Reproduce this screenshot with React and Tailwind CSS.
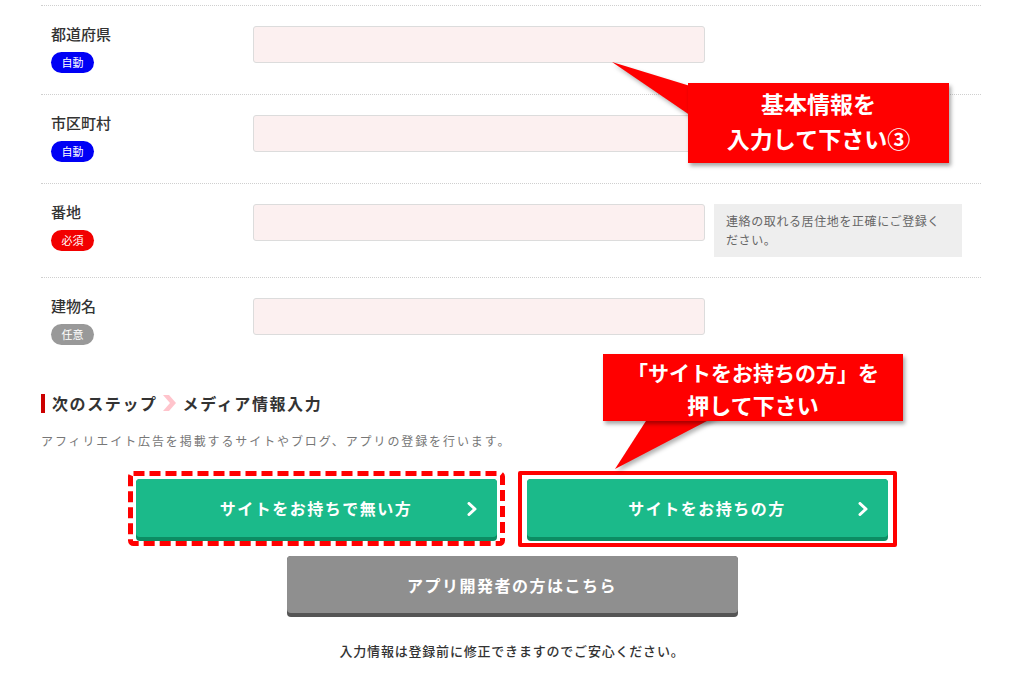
import React from "react";

const FONT = { fontFamily: '"Noto Sans CJK JP", "Noto Sans", sans-serif' };

const rows = [
  { label: "都道府県", badge: "自動", badgeCls: "bg-[#0000f5]" },
  { label: "市区町村", badge: "自動", badgeCls: "bg-[#0000f5]" },
  { label: "番地", badge: "必須", badgeCls: "bg-[#f20000]", help: "連絡の取れる居住地を正確にご登録ください。" },
  { label: "建物名", badge: "任意", badgeCls: "bg-[#999999]", last: true },
];

function Chevron() {
  return (
    <svg width="12" height="14" viewBox="0 0 12 14" className="absolute right-[19px] top-[23px]">
      <polyline points="3,1.5 9,7 3,12.5" fill="none" stroke="#fff" strokeWidth="3" strokeLinecap="round" strokeLinejoin="round" />
    </svg>
  );
}

function GreenButton({ children }) {
  return (
    <div className="relative w-[361px] h-[62px] rounded-[4px] bg-[#0c8d63]">
      <div className="h-[58px] rounded-[4px] bg-[#1bba8a] flex items-center justify-center text-white text-[16px] font-bold tracking-[1.5px]">
        {children}
      </div>
      <Chevron />
    </div>
  );
}

export default function App() {
  return (
    <div className="relative w-[1024px] h-[676px] overflow-hidden bg-white text-[#333]" style={FONT}>
      <div className="ml-[41px] w-[940px] pt-[5px]">
        {rows.map((r) => (
          <div key={r.label} className={`border-t border-dotted border-[#cfcfcf] pl-[10px] pt-[20px] flex ${r.last ? "pb-0" : "pb-[20px]"}`}>
            <div className="w-[202px] min-h-[48px] flex flex-col items-start">
              <div className="text-[15px] leading-[16px] font-medium text-[#333]">{r.label}</div>
              <div className={`mt-[10px] h-[21px] w-[43px] rounded-full ${r.badgeCls} text-white text-[11px] flex items-center justify-center`}>
                {r.badge}
              </div>
            </div>
            <div className="w-[452px] h-[37px] border border-[#dcdcdc] rounded-[3px] bg-[#fcf0f0]" />
            {r.help && (
              <div className="ml-[9px] w-[248px] h-[53px] bg-[#eeeeee] px-[12px] py-[7px] text-[12px] leading-[19px] tracking-[0.6px] text-[#666]">
                {r.help}
              </div>
            )}
          </div>
        ))}

        <div className="mt-[45px] flex items-center">
          <div className="w-[4px] h-[19px] bg-[#cc0000]" />
          <span className="ml-[7px] text-[16px] font-bold tracking-[1.6px] text-[#333]">次のステップ</span>
          <svg width="16" height="16" viewBox="0 0 16 16" className="ml-[4px] mr-[5px]">
            <polygon points="1,0 7,0 14,8 7,16 1,16 8,8" fill="#ffc4cc" />
          </svg>
          <span className="text-[16px] font-bold tracking-[1.6px] text-[#333]">メディア情報入力</span>
        </div>

        <p className="mt-[16px] text-[12px] leading-[20px] tracking-[1.9px] text-[#777]">
          アフィリエイト広告を掲載するサイトやブログ、アプリの登録を行います。
        </p>
      </div>

      <div className="mt-[20px] flex justify-center gap-[13px]">
        <div className="relative w-[377px] h-[75px] pl-[8px] pt-[8px]">
          <svg className="absolute inset-0" width="377" height="75">
            <rect x="2.5" y="2.5" width="372" height="70" rx="3" fill="none" stroke="#ff0000" strokeWidth="5" strokeDasharray="11 5" />
          </svg>
          <GreenButton>サイトをお持ちで無い方</GreenButton>
        </div>
        <div className="w-[379px] h-[76px] border-[4px] border-[#ff0000] rounded-[2px] pl-[5px] pt-[4px]">
          <GreenButton>サイトをお持ちの方</GreenButton>
        </div>
      </div>

      <div className="mt-[9px] mx-auto w-[451px] h-[61px] rounded-[4px] bg-[#555555]">
        <div className="h-[57px] rounded-[4px] bg-[#8f8f8f] flex items-center justify-center text-white text-[16px] font-bold tracking-[1.5px]">
          アプリ開発者の方はこちら
        </div>
      </div>

      <p className="mt-[24px] text-center text-[13px] leading-[20px] font-medium tracking-[0.8px] text-[#333]">
        入力情報は登録前に修正できますのでご安心ください。
      </p>

      {/* annotation callouts */}
      <svg className="absolute inset-0 pointer-events-none" width="1024" height="676" style={{ filter: "drop-shadow(2px 3px 2px rgba(0,0,0,0.3))" }}>
        <polygon points="612,62 700,89 700,122" fill="#ff0000" />
        <polygon points="653,410 728,410 615,469" fill="#ff0000" />
      </svg>
      <div className="absolute left-[688px] top-[83px] w-[261px] h-[80px] bg-[#ff0000] shadow-[2px_3px_4px_rgba(0,0,0,0.35)] flex flex-col items-center justify-center text-white text-[23px] font-bold leading-[35px] pb-[4px]">
        <div>基本情報を</div>
        <div>入力して下さい③</div>
      </div>
      <div className="absolute left-[603px] top-[354px] w-[300px] h-[67px] bg-[#ff0000] shadow-[2px_3px_4px_rgba(0,0,0,0.35)] flex flex-col items-center justify-center text-white font-bold leading-[32px]">
        <div className="text-[21px]">「サイトをお持ちの方」を</div>
        <div className="text-[22px]">押して下さい</div>
      </div>
    </div>
  );
}
